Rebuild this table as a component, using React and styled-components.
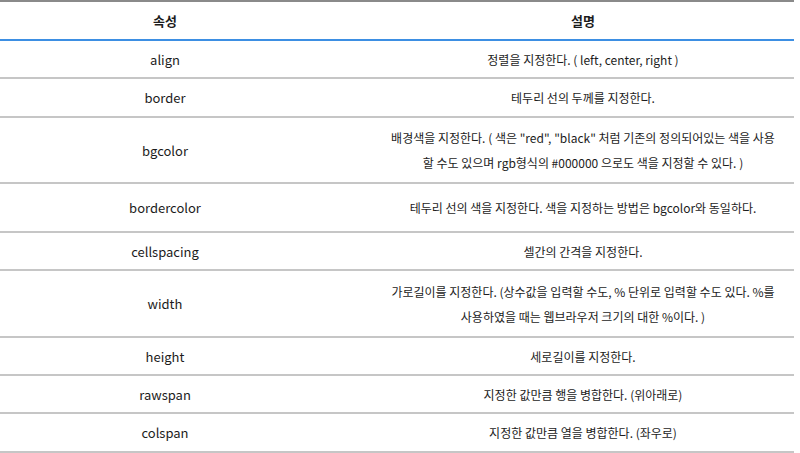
import React from "react";
import styled, { createGlobalStyle } from "styled-components";

const GlobalStyle = createGlobalStyle`
  body {
    margin: 0;
    background: #ffffff;
    font-family: "Noto Sans CJK KR", "Noto Sans", sans-serif;
  }
`;

const Table = styled.table`
  width: 794px;
  border-collapse: collapse;
  table-layout: fixed;
  font-size: 13px;
  color: #1c1c1c;
`;

const HeadCell = styled.th`
  height: 37px;
  padding: 0;
  font-weight: 700;
  text-align: center;
  border-top: 2px solid #8a8a8a;
  border-bottom: 2px solid #3d8fe3;
  padding-left: ${(p) => (p.desc ? "48px" : "0")};
  padding-right: ${(p) => (p.desc ? "16px" : "10px")};
`;

const Row = styled.tr`
  height: ${(p) => p.h}px;
`;

const Cell = styled.td`
  padding: 0;
  text-align: center;
  line-height: 25px;
  word-break: keep-all;
  border-bottom: 2px solid #c6c6c6;
  font-size: ${(p) => (p.desc ? "12px" : "13px")};
  padding-left: ${(p) => (p.desc ? "48px" : "0")};
  padding-right: ${(p) => (p.desc ? "16px" : "10px")};
`;

const NoBreak = styled.span`
  white-space: nowrap;
`;

const rows = [
  { name: "align", desc: "정렬을 지정한다. ( left, center, right )", h: 38 },
  { name: "border", desc: "테두리 선의 두께를 지정한다.", h: 39 },
  {
    name: "bgcolor",
    desc: '배경색을 지정한다. ( 색은 "red", "black" 처럼 기존의 정의되어있는 색을 사용 할 수도 있으며 rgb형식의 #000000 으로도 색을 지정할 수 있다. )',
    h: 66,
  },
  {
    name: "bordercolor",
    desc: "테두리 선의 색을 지정한다. 색을 지정하는 방법은 bgcolor와 동일하다.",
    h: 49,
  },
  { name: "cellspacing", desc: "셀간의 간격을 지정한다.", h: 38 },
  {
    name: "width",
    desc: (
      <>
        가로길이를 지정한다. (상수값을 입력할 수도, % 단위로 입력할 수도 있다.{" "}
        <NoBreak>%를</NoBreak> 사용하였을 때는 웹브라우저 크기의 대한{" "}
        <NoBreak>%이다.</NoBreak> )
      </>
    ),
    h: 67,
  },
  { name: "height", desc: "세로길이를 지정한다.", h: 38 },
  { name: "rawspan", desc: "지정한 값만큼 행을 병합한다. (위아래로)", h: 38 },
  { name: "colspan", desc: "지정한 값만큼 열을 병합한다. (좌우로)", h: 39 },
];

export default function App() {
  return (
    <>
      <GlobalStyle />
      <Table>
        <colgroup>
          <col style={{ width: 340 }} />
          <col />
        </colgroup>
        <thead>
          <tr>
            <HeadCell>속성</HeadCell>
            <HeadCell desc>설명</HeadCell>
          </tr>
        </thead>
        <tbody>
          {rows.map((r) => (
            <Row key={r.name} h={r.h}>
              <Cell>{r.name}</Cell>
              <Cell desc>{r.desc}</Cell>
            </Row>
          ))}
        </tbody>
      </Table>
    </>
  );
}
